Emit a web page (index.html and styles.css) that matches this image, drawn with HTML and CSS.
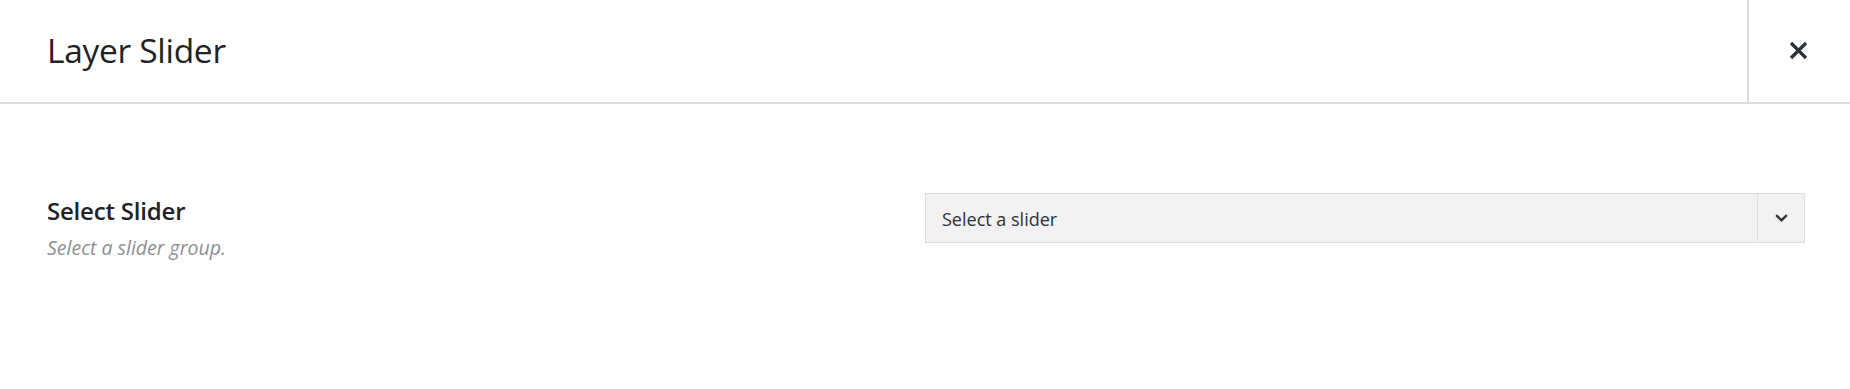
FILE: index.html
```html
<!DOCTYPE html>
<html>
<head>
<meta charset="utf-8">
<link rel="stylesheet" href="styles.css">
</head>
<body>
<div class="modal">
  <header class="modal-header">
    <h1 class="modal-title">Layer Slider</h1>
    <button class="close-btn" aria-label="Close">
      <svg width="19" height="19" viewBox="0 0 19 19"><path d="M2 2 L17 17 M17 2 L2 17" stroke="#2c3338" stroke-width="3.2" stroke-linecap="butt" fill="none"/></svg>
    </button>
  </header>
  <div class="modal-body">
    <div class="field-row">
      <div class="field-label">
        <div class="label-title">Select Slider</div>
        <div class="label-desc">Select a slider group.</div>
      </div>
      <div class="field-control">
        <div class="select">
          <span class="select-value">Select a slider</span>
          <span class="select-arrow">
            <svg width="13" height="8" viewBox="0 0 13 8"><path d="M1.2 1.2 L6.5 6.3 L11.8 1.2" stroke="#2c3338" stroke-width="2.4" fill="none"/></svg>
          </span>
        </div>
      </div>
    </div>
  </div>
</div>
</body>
</html>
```
FILE: styles.css
```css
* { box-sizing: border-box; }
html, body { margin: 0; padding: 0; background: #fff; }
body {
  font-family: "Open Sans", "Noto Sans", sans-serif;
  color: #1d2327;
  width: 1850px;
  height: 389px;
  overflow: hidden;
}
.modal-header {
  display: flex;
  align-items: stretch;
  height: 104px;
  border-bottom: 2px solid #dcdcde;
}
.modal-title {
  flex: 1;
  margin: 0;
  padding-left: 47px;
  display: flex;
  align-items: center;
  font-size: 33.5px;
  font-weight: 500;
  letter-spacing: -0.3px;
  color: #1d2327;
  padding-bottom: 2px;
}
.close-btn {
  width: 103px;
  border: none;
  border-left: 2px solid #dcdcde;
  background: #fff;
  padding: 0;
  display: flex;
  align-items: center;
  justify-content: center;
  padding-bottom: 1px;
  padding-right: 2px;
}
.modal-body {
  padding: 89px 45px 0 47px;
}
.field-row {
  display: grid;
  grid-template-columns: 878px 1fr;
}
.field-label {
  padding-top: 3px;
}
.label-title {
  font-size: 24px;
  font-weight: 600;
  line-height: 30px;
  color: #1d2327;
  letter-spacing: -0.2px;
}
.label-desc {
  margin-top: 7px;
  font-size: 19.5px;
  font-style: italic;
  line-height: 30px;
  color: #8c8f94;
}
.select {
  display: flex;
  align-items: stretch;
  height: 50px;
  border: 1px solid #dcdcde;
  background: #f3f1f1;
}
.select-value {
  flex: 1;
  display: flex;
  align-items: center;
  padding-left: 16px;
  padding-top: 2px;
  font-size: 18px;
  color: #2c3338;
}
.select-arrow {
  width: 47px;
  border-left: 1px solid #dcdcde;
  display: flex;
  align-items: center;
  justify-content: center;
}
```
